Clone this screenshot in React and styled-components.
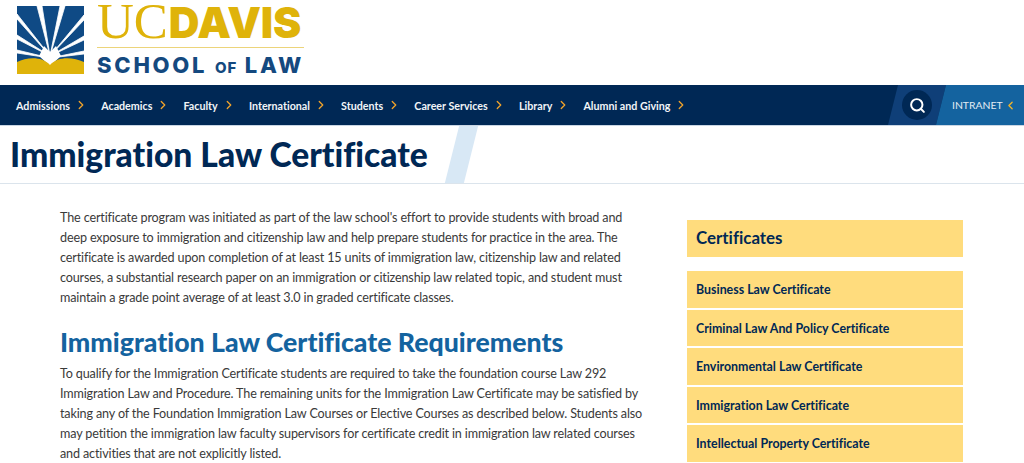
import React from "react";
import styled, { createGlobalStyle } from "styled-components";
import { ChevronRight, ChevronLeft, Search } from "lucide-react";

const Global = createGlobalStyle`
  html, body {
    margin: 0;
    height: 463px;
    overflow: hidden;
    background: #fff;
    font-family: "Lato", "Liberation Sans", sans-serif;
    font-variant-ligatures: none;
  }
`;

const navItems = ["Admissions", "Academics", "Faculty", "International", "Students", "Career Services", "Library", "Alumni and Giving"];
const certificates = [
  "Business Law Certificate",
  "Criminal Law And Policy Certificate",
  "Environmental Law Certificate",
  "Immigration Law Certificate",
  "Intellectual Property Certificate",
];

const Masthead = styled.header`
  height: 85px;
  display: flex;
  align-items: flex-start;
  padding: 6px 0 0 17px;
  box-sizing: border-box;
  gap: 13px;
`;

const Wordmark = styled.div`
  width: 207px;
  display: flex;
  flex-direction: column;
`;

const UniversityName = styled.div`
  display: flex;
  align-items: baseline;
  height: 41px;
  color: #dfb30a;
  line-height: 30px;
  white-space: nowrap;
  border-bottom: 1px solid #ecd47a;
`;

const Uc = styled.span`
  font-family: "Liberation Serif", serif;
  font-size: 51px;
  letter-spacing: 0;
`;

const Davis = styled.span`
  font-family: "Inter", sans-serif;
  font-weight: 900;
  font-size: 42.5px;
  letter-spacing: -0.2px;
  margin-left: 1px;
`;

const SchoolName = styled.div`
  color: #14497f;
  font-family: "Inter", sans-serif;
  font-weight: 800;
  font-size: 22px;
  letter-spacing: 2.75px;
  line-height: 26px;
  margin-top: 4px;
  white-space: nowrap;

  small {
    font-size: 15px;
    letter-spacing: 1px;
  }
`;

const Nav = styled.nav`
  height: 40px;
  background: #002855;
  display: flex;
  align-items: stretch;
  overflow: hidden;
  border-bottom: 1px solid #c9d6e4;
`;

const NavList = styled.div`
  flex: 1;
  display: flex;
  align-items: center;
  padding-left: 16px;
  gap: 13.2px;
`;

const NavItem = styled.a`
  display: flex;
  align-items: center;
  gap: 3px;
  color: #f2f5f8;
  font-size: 10.7px;
  font-weight: 700;
  white-space: nowrap;
  svg {
    color: #f0a32b;
    margin-left: 1px;
  }
`;

const SearchPanel = styled.div`
  width: 48px;
  position: relative;
  display: flex;
  align-items: center;
  justify-content: center;
  &::before {
    content: "";
    position: absolute;
    inset: 0;
    background: #0f3f78;
    transform: skewX(-14deg);
  }
`;

const SearchButton = styled.div`
  position: relative;
  width: 30px;
  height: 30px;
  flex: none;
  border-radius: 50%;
  background: #002855;
  color: #fff;
  display: flex;
  align-items: center;
  justify-content: center;
`;

const Intranet = styled.a`
  width: 83px;
  position: relative;
  display: flex;
  align-items: center;
  gap: 1px;
  padding-left: 11px;
  box-sizing: border-box;
  color: #e3ebf3;
  font-size: 10.4px;
  svg {
    color: #f0b429;
    position: relative;
  }
  span {
    position: relative;
  }
  &::before {
    content: "";
    position: absolute;
    inset: 0 -10px 0 0;
    background: #14639f;
    transform: skewX(-14deg);
  }
`;

const TitleBand = styled.div`
  height: 57px;
  display: flex;
  align-items: center;
  gap: 24px;
  padding-left: 10px;
  border-bottom: 1px solid #dbe4ec;
  overflow: hidden;
`;

const PageTitle = styled.h1`
  margin: 0;
  color: #002855;
  font-size: 33.6px;
  font-weight: 900;
  line-height: 57px;
  white-space: nowrap;
`;

const TitleSlash = styled.div`
  width: 19px;
  height: 57px;
  background: #d8e8f5;
  transform: skewX(-14deg);
`;

const Content = styled.div`
  display: flex;
  align-items: flex-start;
  padding: 24px 61px 0 60px;
  justify-content: space-between;
`;

const Main = styled.main`
  width: 588px;
`;

const Paragraph = styled.p`
  margin: 0;
  color: #3a3a3a;
  font-size: 12.6px;
  letter-spacing: -0.15px;
  line-height: 20px;
`;

const SectionHeading = styled.h2`
  margin: 19px 0 7px;
  color: #14639f;
  font-size: 26.65px;
  font-weight: 900;
  line-height: 30px;
  white-space: nowrap;
`;

const Sidebar = styled.aside`
  width: 276px;
  margin-top: 12px;
  display: flex;
  flex-direction: column;
  gap: 2px;
`;

const SidebarTitle = styled.div`
  height: 37px;
  margin-bottom: 12px;
  padding-left: 9px;
  background: #ffdc7d;
  color: #002855;
  font-size: 16.9px;
  font-weight: 700;
  line-height: 36px;
`;

const SidebarLink = styled.a`
  height: 36.5px;
  padding-left: 9px;
  background: #ffdc7d;
  color: #002855;
  font-size: 12.4px;
  font-weight: 700;
  line-height: 37px;
`;

const rays = [
  "M33 50 L20 0 L25 0 Z",
  "M33 50 L43 0 L48 0 Z",
  "M33 50 L0 8 L0 13 Z",
  "M33 50 L67 9 L67 14 Z",
  "M33 50 L0 29 L0 33 Z",
  "M33 50 L67 30 L67 34 Z",
  "M33 52 L0 44 L0 47 Z",
  "M33 52 L67 45 L67 48 Z",
];

const Logo = () => (
  <svg width="67" height="68" viewBox="0 0 67 68">
    <rect width="67" height="68" fill="#0f4a85" />
    {rays.map((d) => (
      <path key={d} d={d} fill="#fff" stroke="#fff" strokeWidth="0.8" />
    ))}
    <path d="M33 60 L22 50 L27 40 L33 46 L39 40 L44 50 Z" fill="#fff" />
    <path d="M0 56 C10 51 25 50 33 59 C41 50 56 51 67 56 L67 68 L0 68 Z" fill="#dfb30a" />
  </svg>
);

export default function App() {
  return (
    <>
      <Global />
      <Masthead>
        <Logo />
        <Wordmark>
          <UniversityName>
            <Uc>UC</Uc>
            <Davis>DAVIS</Davis>
          </UniversityName>
          <SchoolName>
            SCHOOL <small>OF</small> LAW
          </SchoolName>
        </Wordmark>
      </Masthead>
      <Nav>
        <NavList>
          {navItems.map((item) => (
            <NavItem key={item}>
              {item}
              <ChevronRight size={14} strokeWidth={2.2} />
            </NavItem>
          ))}
        </NavList>
        <SearchPanel>
          <SearchButton>
            <Search size={17} strokeWidth={2.8} />
          </SearchButton>
        </SearchPanel>
        <Intranet>
          <span>INTRANET</span>
          <ChevronLeft size={13} strokeWidth={2.5} />
        </Intranet>
      </Nav>
      <TitleBand>
        <PageTitle>Immigration Law Certificate</PageTitle>
        <TitleSlash />
      </TitleBand>
      <Content>
        <Main>
          <Paragraph>
            The certificate program was initiated as part of the law school's effort to provide students with broad and
            deep exposure to immigration and citizenship law and help prepare students for practice in the area. The
            certificate is awarded upon completion of at least 15 units of immigration law, citizenship law and related
            <br />
            courses, a substantial research paper on an immigration or citizenship law related topic, and student must
            maintain a grade point average of at least 3.0 in graded certificate classes.
          </Paragraph>
          <SectionHeading>Immigration Law Certificate Requirements</SectionHeading>
          <Paragraph>
            To qualify for the Immigration Certificate students are required to take the foundation course Law 292
            Immigration Law and Procedure. The remaining units for the Immigration Law Certificate may be satisfied by
            taking any of the Foundation Immigration Law Courses or Elective Courses as described below. Students also
            may petition the immigration law faculty supervisors for certificate credit in immigration law related courses
            and activities that are not explicitly listed.
          </Paragraph>
        </Main>
        <Sidebar>
          <SidebarTitle>Certificates</SidebarTitle>
          {certificates.map((name) => (
            <SidebarLink key={name}>{name}</SidebarLink>
          ))}
        </Sidebar>
      </Content>
    </>
  );
}
